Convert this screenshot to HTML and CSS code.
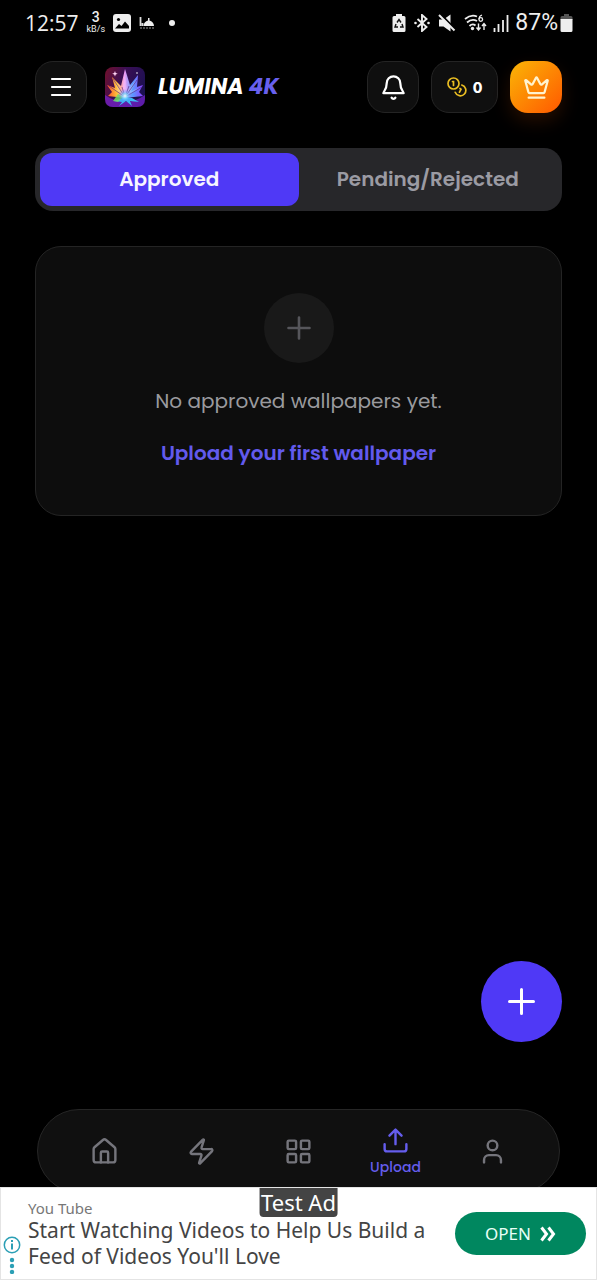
FILE: index.html
```html
<!DOCTYPE html>
<html lang="en">
<head>
<meta charset="utf-8">
<meta name="viewport" content="width=device-width, initial-scale=1">
<title>Lumina 4K</title>
<link rel="stylesheet" href="styles.css">
</head>
<body>
<div class="app">
  <div class="status">
    <div class="status-group">
      <span class="clock">12:57</span>
      <span class="speed"><b>3</b><small>kB/s</small></span>
      <svg class="st-photo" width="18" height="18" viewBox="0 0 18 18"><rect width="18" height="18" rx="3" fill="#eee"/><circle cx="5.500" cy="5.500" r="1.600" fill="#000"/><path d="M2 14.500l4-4.500 2.500 2 3.500-4.500 4 4.500v2.500z" fill="#000"/></svg>
      <svg class="st-dome" width="16" height="14" viewBox="0 0 16 14"><path d="M1.500 1v9M3.500 7v3" stroke="#ddd" stroke-width="1.800"/><path d="M4.500 10c0-3 2-4.500 4.500-5.500V2h1.500v2.500c2.500 1 4.500 2.500 4.500 5.500z" fill="#eee"/><path d="M1 12h14" stroke="#999" stroke-dasharray="2 1"/></svg>
      <span class="dot"></span>
    </div>
    <div class="status-group">
      <svg width="14" height="18" viewBox="0 0 14 18"><path d="M4 0h6v2h2a1.500 1.500 0 0 1 1.500 1.500v13A1.500 1.500 0 0 1 12 18H2a1.500 1.500 0 0 1-1.500-1.500v-13A1.500 1.500 0 0 1 2 2h2z" fill="#eee"/><path d="M5 8.500l2-3 2 3M10 10l1 3H8M6 13H3l1-3" fill="none" stroke="#111" stroke-width="1.400"/></svg>
      <svg class="st-bt" width="16" height="18" viewBox="0 0 16 18"><path d="M3.500 5l9 8L8 17V1l4.500 4-9 8" fill="none" stroke="#eee" stroke-width="1.900"/><circle cx="1.500" cy="9" r="1.300" fill="#eee"/><circle cx="14.500" cy="9" r="1.300" fill="#eee"/></svg>
      <svg class="st-mute" width="18" height="18" viewBox="0 0 18 18"><path d="M1 5.500h4.500l7-5v17l-7-5H1z" fill="#eee"/><path d="M2.500 0l15 15.500" stroke="#000" stroke-width="2"/><path d="M1 1l15.500 15.500" stroke="#eee" stroke-width="2"/></svg>
      <svg class="st-wifi" width="23" height="18" viewBox="0 0 23 18"><path d="M1 5q6-5 12-2.500M3 8.500q5-4.500 10-1.500M5.500 12q3-3 6-.5" fill="none" stroke="#eee" stroke-width="1.800"/><circle cx="8.500" cy="14.500" r="1.700" fill="#eee"/><path d="M18 1q-3 1-3 4.200" fill="none" stroke="#eee" stroke-width="1.300"/><circle cx="16.800" cy="5.500" r="1.800" fill="none" stroke="#eee" stroke-width="1.300"/><path d="M14.500 9.500v6M12.500 13.500l2 2.500 2-2.500M20 16v-6M18 12l2-2.500 2 2.500" fill="none" stroke="#eee" stroke-width="1.400"/></svg>
      <svg class="st-signal" width="16" height="18" viewBox="0 0 16 18"><path d="M1.500 14v4M5.500 10v8M10 6v12M14.500 1v17" stroke="#eee" stroke-width="1.800"/></svg>
      <span class="battery-text">87%</span>
      <svg class="st-batt" width="13" height="18" viewBox="0 0 13 18"><path d="M4 0h5v2h2a1.500 1.500 0 0 1 1.500 1.500V6H.5V3.500A1.500 1.500 0 0 1 2 2h2z" fill="#555"/><path d="M.5 5h12v11.500A1.500 1.500 0 0 1 11 18H2a1.500 1.500 0 0 1-1.500-1.500z" fill="#eee"/></svg>
    </div>
  </div>

  <header class="header">
    <button class="square" aria-label="Menu"><svg width="26" height="26" viewBox="0 0 26 26" stroke="#fff" stroke-width="2.200" stroke-linecap="round"><path d="M4 5h18M4 13h18M4 21h18"/></svg></button>
    <svg class="logo" width="40" height="40" viewBox="0 0 40 40" aria-hidden="true">
      <defs>
        <linearGradient id="bg" x1="0" x2="1" y1=".2" y2=".6"><stop offset="0" stop-color="#6b1030"/><stop offset=".4" stop-color="#3a0f55"/><stop offset="1" stop-color="#1a0f50"/></linearGradient>
        <radialGradient id="glow"><stop offset="0" stop-color="#fff"/><stop offset=".35" stop-color="#7fdcff" stop-opacity=".8"/><stop offset="1" stop-color="#46f" stop-opacity="0"/></radialGradient>
        <linearGradient id="wing" x1="0" x2="1"><stop offset="0" stop-color="#ff4a2a"/><stop offset=".28" stop-color="#ffc23a"/><stop offset=".48" stop-color="#f39af5"/><stop offset=".7" stop-color="#5c9dff"/><stop offset="1" stop-color="#8a3cff"/></linearGradient>
      </defs>
      <rect width="40" height="40" rx="8" fill="url(#bg)"/>
      <path d="M0 28v4q0 8 8 8h24q8 0 8-8v-4q-20 14-40 0z" fill="#7a22d0" opacity=".7"/>
      <path d="M20 31L3 29l4-4-5-7 8 3-3-11 9 9 4-17 5 16 8-10-1 12 6-2-4 7 4 4z" fill="url(#wing)"/>
      <path d="M20 30L9 22l4 1-5-11 9 12 3-18 2 18 10-12-6 12 8-3-8 6z" fill="#fff" opacity=".22"/>
      <path d="M20 30L4 19M20 30L8 12M17 20l3 10M24 19l-4 11M20 30l12-17M20 30l17-10" stroke="#50207b" stroke-width=".6"/>
      <path d="M20 30L9 34l8 1-3 4 7-5 6 5-2-5 9 1-7-4z" fill="#3cb9f4"/>
      <path d="M13 27l5 3-5 5-5-1z" fill="#71dc65" opacity=".85"/>
      <circle cx="20" cy="29" r="7" fill="url(#glow)"/>
      <path d="M10 4l.7 2 2 .7-2 .8L10 9.500l-.8-2-2-.8 2-.7z" fill="#ffd5f5"/><circle cx="32" cy="6" r=".8" fill="#fff"/>
    </svg>
    <h1 class="brand">LUMINA <span>4K</span></h1>
    <div class="actions">
      <button class="square" aria-label="Notifications"><svg width="27" height="27" viewBox="0 0 24 24" fill="none" stroke="#fff" stroke-width="2" stroke-linecap="round" stroke-linejoin="round"><path d="M10.300 21a1.940 1.940 0 0 0 3.400 0"/><path d="M6 8a6 6 0 0 1 12 0c0 6 3 7.500 3 9H3c0-1.500 3-3 3-9"/></svg></button>
      <button class="coins" aria-label="Coins: 0"><svg width="20" height="20" viewBox="0 0 20 20" fill="none" stroke="#e9bd22" stroke-width="1.700" stroke-linecap="round"><circle cx="6.500" cy="6.500" r="5.500"/><path d="M14.800 8a5.500 5.500 0 1 1-6.600 7.300M5.500 4.500h1v4M13 11.500l1 .7-1.500 3"/></svg><span>0</span></button>
      <button class="square premium" aria-label="Premium"><svg width="27" height="27" viewBox="0 0 24 24" fill="none" stroke="#fff3cf" stroke-width="2" stroke-linecap="round" stroke-linejoin="round"><path d="M11.560 3.270a.5.5 0 0 1 .88 0L15.390 8.870a1 1 0 0 0 1.520.3L21.180 5.500a.5.5 0 0 1 .8.520l-2.830 10.250a1 1 0 0 1-.96.730H5.810a1 1 0 0 1-.96-.73L2.020 6.020a.5.5 0 0 1 .8-.52l4.270 3.670a1 1 0 0 0 1.520-.3zM5 21h14"/></svg></button>
    </div>
  </header>

  <main class="main">
    <div class="tabs" role="tablist">
      <button class="tab active" role="tab" aria-selected="true">Approved</button>
      <button class="tab" role="tab" aria-selected="false">Pending/Rejected</button>
    </div>
    <section class="empty">
      <div class="empty-icon"><svg width="34" height="34" viewBox="0 0 34 34" stroke="#56565b" stroke-width="2.600" stroke-linecap="round"><path d="M17 6.500v21M6.500 17h21"/></svg></div>
      <p>No approved wallpapers yet.</p>
      <a href="#upload">Upload your first wallpaper</a>
    </section>
    <button class="fab" aria-label="Upload wallpaper"><svg width="35" height="35" viewBox="0 0 35 35" stroke="#fff" stroke-width="3" stroke-linecap="round"><path d="M17.500 5.500v24M5.500 17.500h24"/></svg></button>
  </main>

  <nav class="nav">
    <a href="#home" aria-label="Home"><svg class="icon" viewBox="0 0 24 24"><path d="M15 21v-8a1 1 0 0 0-1-1h-4a1 1 0 0 0-1 1v8"/><path d="M3 10a2 2 0 0 1 .7-1.500l7-6a2 2 0 0 1 2.600 0l7 6A2 2 0 0 1 21 10v9a2 2 0 0 1-2 2H5a2 2 0 0 1-2-2z"/></svg></a>
    <a href="#trending" aria-label="Trending"><svg class="icon" viewBox="0 0 24 24"><path d="M4 14a1 1 0 0 1-.78-1.630l9.900-10.200a.5.5 0 0 1 .86.460l-1.920 6.020A1 1 0 0 0 13 10h7a1 1 0 0 1 .78 1.630l-9.900 10.200a.5.5 0 0 1-.86-.46l1.920-6.020A1 1 0 0 0 11 14z"/></svg></a>
    <a href="#categories" aria-label="Categories"><svg class="icon" viewBox="0 0 24 24"><rect x="3" y="3" width="7" height="7" rx="1"/><rect x="14" y="3" width="7" height="7" rx="1"/><rect x="14" y="14" width="7" height="7" rx="1"/><rect x="3" y="14" width="7" height="7" rx="1"/></svg></a>
    <a class="current" href="#upload" aria-current="page"><svg class="icon" viewBox="0 0 24 24"><path d="M21 15v4a2 2 0 0 1-2 2H5a2 2 0 0 1-2-2v-4M17 8l-5-5-5 5M12 3v12"/></svg><span>Upload</span></a>
    <a href="#profile" aria-label="Profile"><svg class="icon" viewBox="0 0 24 24"><path d="M19 21v-2a4 4 0 0 0-4-4H9a4 4 0 0 0-4 4v2"/><circle cx="12" cy="7" r="4"/></svg></a>
  </nav>

  <aside class="ad">
    <div class="ad-marks">
      <svg width="18" height="38" viewBox="0 0 18 38"><circle cx="9" cy="9" r="7.700" fill="none" stroke="#2b9fb5" stroke-width="1.500"/><path d="M9 7.500v6M9 4v2" stroke="#2b9fb5" stroke-width="2"/><g fill="#2b9fb5"><circle cx="9" cy="24" r="2.200"/><circle cx="9" cy="30" r="2.200"/><circle cx="9" cy="36" r="2.200"/></g></svg>
    </div>
    <div class="ad-copy">
      <div class="ad-source">You Tube</div>
      <div class="ad-title">Start Watching Videos to Help Us Build a Feed of Videos You'll Love</div>
    </div>
    <button class="open">OPEN <svg width="16" height="16" viewBox="0 0 16 16" fill="none" stroke="#fff" stroke-width="3"><path d="M1.500 1.500L6.500 8l-5 6.500M8.500 1.500l5 6.500-5 6.500"/></svg></button>
    <span class="test">Test Ad</span>
  </aside>
</div>
</body>
</html>
```
FILE: styles.css
```css
* { box-sizing: border-box; }
body { margin: 0; background: #000; color: #fff; font-family: Poppins, Inter, "Open Sans", sans-serif; }
button { margin: 0; padding: 0; border: 0; color: inherit; font: inherit; cursor: pointer; }
a { color: inherit; text-decoration: none; }
svg { display: block; flex: none; }

.app { display: flex; flex-direction: column; min-height: 100vh; }

.status { display: flex; justify-content: space-between; align-items: center; height: 45px; padding: 0 24px 0 25px; font-family: "Noto Sans", sans-serif; color: #eee; }
.status-group { display: flex; align-items: center; gap: 8px; }
.clock { font-family: "Open Sans", sans-serif; font-size: 21px; }
.speed { display: flex; flex-direction: column; align-items: center; font-family: Roboto, sans-serif; }
.speed b { font-size: 14px; font-weight: 500; line-height: 14px; }
.speed small { font-size: 9px; line-height: 11px; }
.dot { width: 6px; height: 6px; margin-left: 6px; border-radius: 50%; background: #eee; }
.battery-text { font-family: Roboto, sans-serif; font-size: 23px; }
.st-wifi, .st-signal { margin-right: -2px; }
.st-batt { margin-left: -6px; }

.header { display: flex; align-items: center; padding: 16px 35px 0; }
.square, .coins { display: flex; align-items: center; justify-content: center; height: 52px; border: 1px solid #242424; border-radius: 18px; background: #0f0f0f; }
.square { width: 52px; flex: none; }
.logo { margin: 0 13px 0 18px; }
.brand { margin: 0; font-size: 22px; font-weight: 700; font-style: italic; line-height: 28px; white-space: nowrap; }
.brand span { color: #6860ee; }
.actions { display: flex; gap: 12px; margin-left: auto; }
.coins { gap: 6px; width: 67px; font-family: Inter, sans-serif; font-size: 14px; font-weight: 800; }
.premium { border: 0; background: linear-gradient(135deg, #fbb606, #ff5800); box-shadow: 0 8px 18px rgba(255, 95, 0, .15); }

.main { display: flex; flex: 1; flex-direction: column; padding: 35px 35px 67px; }
.tabs { display: flex; padding: 5px; border-radius: 18px; background: #27272a; }
.tab { flex: 1; height: 53px; padding-bottom: 2px; border-radius: 12px; background: transparent; color: #9b9ba3; font-size: 20px; font-weight: 600; }
.tab.active { background: #4f39f6; color: #f7f5ff; }

.empty { display: flex; flex-direction: column; align-items: center; margin-top: 35px; padding: 46px 20px; border: 1px solid #242424; border-radius: 26px; background: #0d0d0d; font-size: 20px; line-height: 32px; }
.empty-icon { display: flex; align-items: center; justify-content: center; width: 70px; height: 70px; border-radius: 50%; background: #191919; }
.empty p { margin: 22px 0 20px; color: #9a9a9e; }
.empty a { color: #625aed; font-weight: 600; }

.fab { display: flex; align-items: center; justify-content: center; align-self: flex-end; width: 81px; height: 81px; margin-top: auto; border-radius: 50%; background: #4f39f6; }

.nav { display: flex; align-items: center; height: 84px; margin: 0 37px -6px; padding: 0 18px; border: 1px solid #262626; border-radius: 42px; background: #101010; color: #75757c; }
.nav a { display: flex; flex: 1; flex-direction: column; align-items: center; font-size: 14px; font-weight: 500; line-height: 24px; }
.nav .current { padding-top: 3px; color: #655ded; }
.icon { width: 29px; height: 29px; fill: none; stroke: currentColor; stroke-width: 2; stroke-linecap: round; stroke-linejoin: round; }

.ad { position: relative; display: flex; align-items: center; height: 93px; padding: 0 10px 0 2px; border: 1px solid #e4e4e4; background: #fff; color: #444; font-family: "Noto Sans", sans-serif; }
.ad-marks { align-self: flex-end; padding-bottom: 5px; }
.ad-copy { flex: 1; padding: 0 16px 0 7px; }
.ad-source { color: #777; font-size: 15px; line-height: 18px; }
.ad-title { font-size: 21px; line-height: 26px; }
.open { display: flex; flex: none; align-items: center; justify-content: center; gap: 9px; width: 131px; height: 43px; border-radius: 22px; background: #00875f; color: #e9fff7; font-size: 17px; }
.test { position: absolute; top: 0; left: 50%; transform: translateX(-50%); padding: 0 2px; border-radius: 0 0 4px 4px; background: #444; color: #fff; font-size: 22px; line-height: 29px; white-space: nowrap; }
```
